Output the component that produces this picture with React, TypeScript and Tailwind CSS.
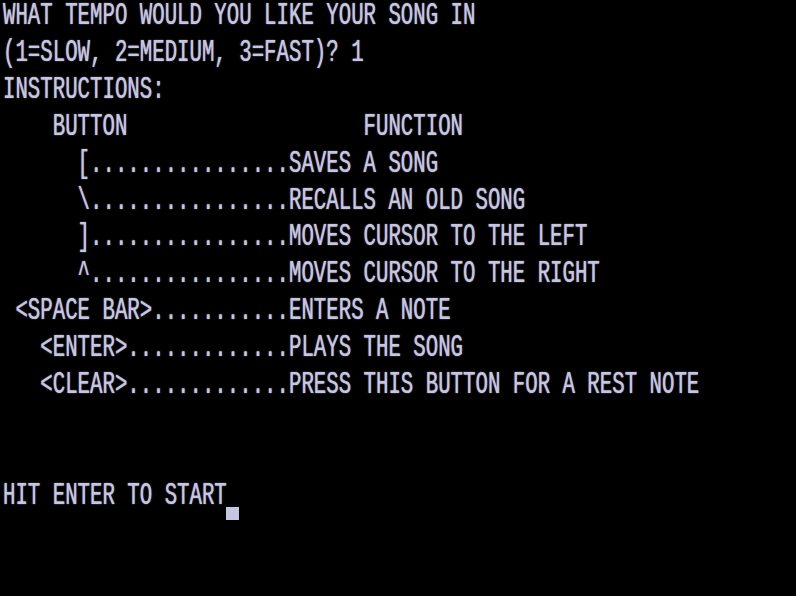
import React from "react";

const lines: string[] = [
  "WHAT TEMPO WOULD YOU LIKE YOUR SONG IN",
  "(1=SLOW, 2=MEDIUM, 3=FAST)? 1",
  "INSTRUCTIONS:",
  "    BUTTON                   FUNCTION",
  "      [................SAVES A SONG",
  "      \\................RECALLS AN OLD SONG",
  "      ]................MOVES CURSOR TO THE LEFT",
  "      ^................MOVES CURSOR TO THE RIGHT",
  " <SPACE BAR>...........ENTERS A NOTE",
  "   <ENTER>.............PLAYS THE SONG",
  "   <CLEAR>.............PRESS THIS BUTTON FOR A REST NOTE",
  "",
  "",
  "HIT ENTER TO START",
];

export default function App() {
  return (
    <div
      className="w-[796px] h-[596px] bg-black overflow-hidden text-[#c6c6e2]"
      style={{ fontFamily: '"Liberation Mono", "DejaVu Sans Mono", monospace' }}
    >
      <div className="pl-[3px] -mt-[1px]">
        {lines.map((l, i) => (
          <div key={i} className="relative h-[36.9px] flex items-center">
            <div className="whitespace-pre text-[20.73px] leading-none scale-y-150 origin-center [text-shadow:0_0_1px_#c6c6e2]">
              {l || " "}
            </div>
            {i === 13 && (
              <div className="absolute left-[223px] top-[28px] w-[13px] h-[13px] bg-[#c6c6e2]" />
            )}
          </div>
        ))}
      </div>
    </div>
  );
}
